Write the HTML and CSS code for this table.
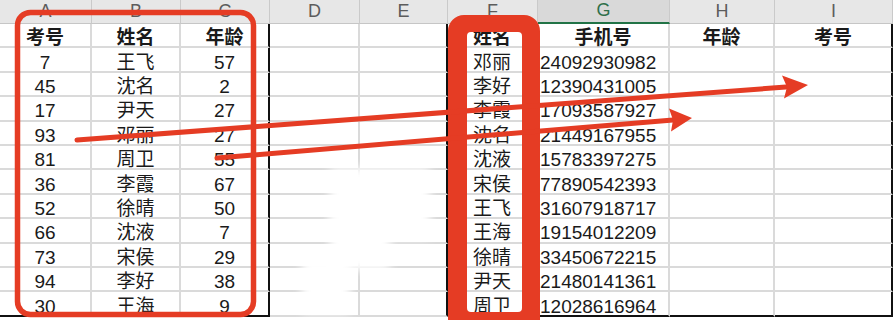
FILE: index.html
```html
<!DOCTYPE html>
<html lang="zh">
<head>
<meta charset="utf-8">
<title>Sheet</title>
<link rel="stylesheet" href="styles.css">
</head>
<body>
<div class="stage">
  <div class="sheet">
    <div class="h">A</div><div class="h">B</div><div class="h">C</div><div class="h">D</div><div class="h">E</div><div class="h">F</div><div class="h sel">G</div><div class="h">H</div><div class="h">I</div>

    <div class="c b">考号</div><div class="c b">姓名</div><div class="c b rk">年龄</div><div class="c"></div><div class="c rk"></div><div class="c b">姓名</div><div class="c b">手机号</div><div class="c b">年龄</div><div class="c b rk">考号</div>
    <div class="c">7</div><div class="c">王飞</div><div class="c rk">57</div><div class="c"></div><div class="c rk"></div><div class="c">邓丽</div><div class="c l">24092930982</div><div class="c"></div><div class="c rk"></div>
    <div class="c">45</div><div class="c">沈名</div><div class="c rk">2</div><div class="c"></div><div class="c rk"></div><div class="c">李好</div><div class="c l">12390431005</div><div class="c"></div><div class="c rk"></div>
    <div class="c">17</div><div class="c">尹天</div><div class="c rk">27</div><div class="c"></div><div class="c rk"></div><div class="c">李霞</div><div class="c l">17093587927</div><div class="c"></div><div class="c rk"></div>
    <div class="c">93</div><div class="c">邓丽</div><div class="c rk">27</div><div class="c"></div><div class="c rk"></div><div class="c">沈名</div><div class="c l">21449167955</div><div class="c"></div><div class="c rk"></div>
    <div class="c">81</div><div class="c">周卫</div><div class="c rk">55</div><div class="c"></div><div class="c rk"></div><div class="c">沈液</div><div class="c l">15783397275</div><div class="c"></div><div class="c rk"></div>
    <div class="c">36</div><div class="c">李霞</div><div class="c rk">67</div><div class="c"></div><div class="c rk"></div><div class="c">宋侯</div><div class="c l">77890542393</div><div class="c"></div><div class="c rk"></div>
    <div class="c">52</div><div class="c">徐晴</div><div class="c rk">50</div><div class="c"></div><div class="c rk"></div><div class="c">王飞</div><div class="c l">31607918717</div><div class="c"></div><div class="c rk"></div>
    <div class="c">66</div><div class="c">沈液</div><div class="c rk">7</div><div class="c"></div><div class="c rk"></div><div class="c">王海</div><div class="c l">19154012209</div><div class="c"></div><div class="c rk"></div>
    <div class="c">73</div><div class="c">宋侯</div><div class="c rk">29</div><div class="c"></div><div class="c rk"></div><div class="c">徐晴</div><div class="c l">33450672215</div><div class="c"></div><div class="c rk"></div>
    <div class="c">94</div><div class="c">李好</div><div class="c rk">38</div><div class="c"></div><div class="c rk"></div><div class="c">尹天</div><div class="c l">21480141361</div><div class="c"></div><div class="c rk"></div>
    <div class="c bk">30</div><div class="c bk">王海</div><div class="c bk rk">9</div><div class="c"></div><div class="c rk"></div><div class="c bk">周卫</div><div class="c l bk">12028616964</div><div class="c bk"></div><div class="c bk rk"></div>
  </div>

  <div class="blot blot1"></div>
  <div class="blot blot2"></div>
  <div class="blot blot3"></div>

  <svg class="marks" width="895" height="320" viewBox="0 0 895 320" aria-hidden="true">
    <rect x="17.5" y="12.5" width="236" height="302" rx="13" fill="none" stroke="#e53c24" stroke-width="5.5"/>
    <path fill="#e53c24" fill-rule="evenodd" d="M464 15 H524 A16 16 0 0 1 540 31 V332 H448 V31 A16 16 0 0 1 464 15 Z M471 32 H518 A4 4 0 0 1 522 36 V308 A4 4 0 0 1 518 312 H471 A4 4 0 0 1 467 308 V36 A4 4 0 0 1 471 32 Z"/>
    <path d="M77 140 L786 87" stroke="#e53c24" stroke-width="5" stroke-linecap="round" fill="none"/>
    <polygon fill="#e53c24" points="808,85 782,75.5 787,87 784,98.5"/>
    <path d="M217 158 L673 120" stroke="#e53c24" stroke-width="5" stroke-linecap="round" fill="none"/>
    <polygon fill="#e53c24" points="692,118 669,108.5 673,120 671,131.5"/>
  </svg>
</div>
</body>
</html>
```

FILE: styles.css
```css
* { box-sizing: border-box; }

body {
  margin: 0;
  background: #ffffff;
}

.stage {
  position: relative;
  width: 895px;
  height: 320px;
  overflow: hidden;
  background: #ffffff;
  font-family: "Liberation Sans", "Noto Sans CJK SC", sans-serif;
}

.sheet {
  display: grid;
  grid-template-columns: 92px 89px 89px 90px 88px 90px 132px 105px 118px;
  grid-template-rows: 24px repeat(12, 24.4px);
}

.h {
  background: #e7e7e7;
  border-right: 1px solid #cacaca;
  border-bottom: 1px solid #c6c6c6;
  color: #5c5c5c;
  font-size: 18px;
  line-height: 1;
  display: flex;
  justify-content: center;
  align-items: flex-end;
  padding-bottom: 3px;
}

.h.sel {
  background: #d9d9d9;
  color: #2f6f4a;
  border-bottom: 2px solid #217346;
}

.c {
  border-right: 2px solid #dadada;
  border-bottom: 2px solid #dadada;
  font-size: 19px;
  line-height: 1;
  color: #1a1a1a;
  display: flex;
  align-items: center;
  justify-content: center;
  padding-top: 5px;
  white-space: nowrap;
}

.c.l {
  justify-content: flex-start;
  padding-left: 2px;
}

.b { font-weight: bold; }

.rk { border-right-color: #111111; }
.bk { border-bottom-color: #111111; }

.blot {
  position: absolute;
  background: #ffffff;
  filter: blur(5px);
}

.blot1 { left: 330px; top: 168px; width: 100px; height: 70px; }
.blot2 { left: 330px; top: 220px; width: 60px; height: 50px; }
.blot3 { left: 302px; top: 258px; width: 48px; height: 55px; }

.marks {
  position: absolute;
  left: 0;
  top: 0;
  pointer-events: none;
}
```
